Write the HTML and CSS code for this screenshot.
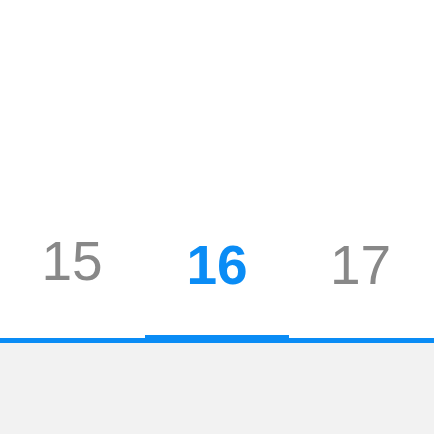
FILE: index.html
```html
<!DOCTYPE html>
<html>
<head>
<meta charset="utf-8">
<link rel="stylesheet" href="styles.css">
</head>
<body>
<div class="page">
  <div class="top"></div>
  <div class="tabs">
    <div class="tab tab-a">15</div>
    <div class="tab tab-active">16</div>
    <div class="tab tab-c">17</div>
  </div>
  <div class="bar">
    <div class="indicator"></div>
  </div>
  <div class="bottom"></div>
</div>
</body>
</html>
```
FILE: styles.css
```css
html, body {
  margin: 0;
  padding: 0;
  width: 434px;
  height: 434px;
  overflow: hidden;
  background: #ffffff;
}
.page {
  display: flex;
  flex-direction: column;
  height: 434px;
}
.top {
  height: 232px;
}
.tabs {
  display: grid;
  grid-template-columns: 145px 144px 145px;
  height: 103px;
}
.tab {
  font-family: "Liberation Sans", Arial, sans-serif;
  font-size: 55px;
  line-height: 60px;
  color: #888888;
  text-align: center;
}
.tab-a {
  padding-top: 0;
  margin-top: -1px;
  margin-left: -1px;
}
.tab-c {
  padding-top: 3px;
  margin-left: -2px;
}
.tab-active {
  color: #0a8cf5;
  font-weight: bold;
  padding-top: 3px;
}
.bar {
  position: relative;
  height: 5px;
  margin-top: 3px;
  background: #0a8cf5;
}
.indicator {
  position: absolute;
  left: 145px;
  width: 144px;
  top: -3px;
  height: 8px;
  background: #0a8cf5;
}
.bottom {
  flex: 1;
  background: #f2f2f2;
}
```
